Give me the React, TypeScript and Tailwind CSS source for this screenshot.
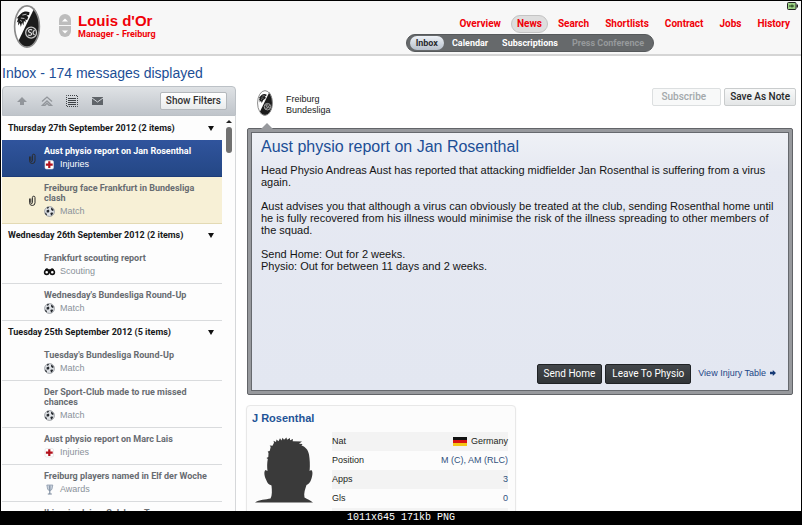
import { clsx } from "clsx";

type IconKind = "injury" | "match" | "scout" | "award";

interface Message {
  title: string;
  category: string;
  icon: IconKind;
  attached?: boolean;
  state?: "selected" | "unread";
}

const groups: { date: string; items: Message[]; count: number }[] = [
  {
    date: "Thursday 27th September 2012",
    count: 2,
    items: [
      { title: "Aust physio report on Jan Rosenthal", category: "Injuries", icon: "injury", attached: true, state: "selected" },
      { title: "Freiburg face Frankfurt in Bundesliga clash", category: "Match", icon: "match", attached: true, state: "unread" },
    ],
  },
  {
    date: "Wednesday 26th September 2012",
    count: 2,
    items: [
      { title: "Frankfurt scouting report", category: "Scouting", icon: "scout" },
      { title: "Wednesday's Bundesliga Round-Up", category: "Match", icon: "match" },
    ],
  },
  {
    date: "Tuesday 25th September 2012",
    count: 5,
    items: [
      { title: "Tuesday's Bundesliga Round-Up", category: "Match", icon: "match" },
      { title: "Der Sport-Club made to rue missed chances", category: "Match", icon: "match" },
      { title: "Aust physio report on Marc Lais", category: "Injuries", icon: "injury" },
      { title: "Freiburg players named in Elf der Woche", category: "Awards", icon: "award" },
      { title: "Ibisevic claims Salzburg To", category: "Match", icon: "match" },
    ],
  },
];

const navItems = ["Overview", "News", "Search", "Shortlists", "Contract", "Jobs", "History"];
const subNavItems = ["Inbox", "Calendar", "Subscriptions", "Press Conference"];

function Crest({ className }: { className?: string }) {
  return (
    <svg viewBox="0 0 26 42" className={className} aria-hidden="true">
      <ellipse cx="13" cy="21" rx="12" ry="20" fill="#fff" />
      <path d="M20 3.500C23.500 8 25 14 25 21c0 11-5 20-12 20-3.500 0-6.500-2-8.500-5.500z" fill="#1b1b1b" />
      <path
        d="M7.500 8c2-1.800 5.500-2.200 8-.8l-.5 2.600-2.500.4 1.800 1.600-1.300 3.200-1.500-1 .2 3-1.700-1.500-.5 4.500-1.300-3-1.200 4.500-1-4-1.700 2.500.2-4L3 17l1.500-4-1.700.3L5 10.500z"
        fill="#1b1b1b"
      />
      <path d="M8.500 9.800l4-.8M7 12.800l3.500.4M6.500 15l1.500 1" stroke="#fff" strokeWidth=".7" />
      <circle cx="17" cy="27" r="5.300" fill="#2b2b2b" stroke="#c9c9c9" strokeWidth="1.200" />
      <path d="M18 24.300c-3.500-1.200-4.700 1.500-2 2.500s1.800 3.700-2 2.500M20.500 24.800c-2.200.5-2.200 4 0 4.200" fill="none" stroke="#e4e4e4" strokeWidth="1.100" />
      <ellipse cx="13" cy="21" rx="12.100" ry="20.100" fill="none" stroke="#8a8a8a" strokeWidth="1.600" />
    </svg>
  );
}

function CategoryIcon({ kind }: { kind: IconKind }) {
  if (kind === "injury") {
    return (
      <svg viewBox="0 0 11 11" className="size-[11px]" aria-hidden="true">
        <rect x="1" y="1.500" width="8.500" height="8.500" rx="1.500" fill="#fff" stroke="#ddd" strokeWidth=".6" />
        <path d="M4.200 2.300h2.200v2.300h2.300v2.200H6.400v2.300H4.200V6.800H1.900V4.600h2.300z" fill="#b3121d" />
      </svg>
    );
  }
  if (kind === "scout") {
    return (
      <svg viewBox="0 0 11 11" className="size-[11px] overflow-visible" aria-hidden="true">
        <path d="M1 3.500Q2.800 1.200 4.600 3.200h1.800Q8.200 1.200 10 3.500V7H1z" fill="#111" />
        <circle cx="2.700" cy="6.300" r="2.100" fill="#fff" stroke="#111" strokeWidth="1.600" />
        <circle cx="8.300" cy="6.300" r="2.100" fill="#fff" stroke="#111" strokeWidth="1.600" />
      </svg>
    );
  }
  if (kind === "award") {
    return (
      <svg viewBox="0 0 11 11" className="size-[11px]" aria-hidden="true">
        <path d="M2.800 1h6l-.8 4Q7.500 6.500 5.800 6.500T3.600 5z" fill="#c9d2dd" stroke="#8391a3" strokeWidth=".7" />
        <path d="M5.800 1.500v8M3.800 10h4" stroke="#77869a" strokeWidth="1.100" />
      </svg>
    );
  }
  return (
    <svg viewBox="0 0 11 11" className="size-[11px]" aria-hidden="true">
      <circle cx="5.500" cy="5.500" r="4.900" fill="#dfe2e6" stroke="#8b8f94" strokeWidth=".8" />
      <path d="M2.500 4.500l2-1 1 1.500-.8 1.600-2-.2zM7 1.500l2.500 1.800-.3 2-2-1.200zM1 6.500l1.500 1 .6 2-1.500-.8zM6.300 7l2-.8.8 1.500-2 2zM3 1.200l2-.3-.4 1.300L3 2.800z" fill="#24282d" />
    </svg>
  );
}

function Paperclip() {
  return (
    <svg viewBox="0 0 8 11" className="h-[11px] w-2" fill="none" stroke="#2b2b2b" aria-hidden="true">
      <path d="M2.800 3.500v4.200a.8.8 0 0 0 1.600 0V2.500a1.300 1.300 0 0 1 2.600 0v5.300a2.700 2.700 0 0 1-5.400 0V3.500" />
    </svg>
  );
}

function MessageRow({ item }: { item: Message }) {
  const selected = item.state === "selected";
  const unread = item.state === "unread";
  return (
    <li
      className={clsx(
        "flex border-b py-[6px]",
        selected && "border-[#1d3c78] bg-linear-to-b from-[#30549d] to-[#244785]",
        unread && "border-[#e3dab4] bg-[#f7f0d6]",
        !item.state && "border-[#d9dbdd]"
      )}
    >
      <div className="flex w-[42px] shrink-0 items-center justify-end pr-2">{item.attached && <Paperclip />}</div>
      <a href="#" className="block min-w-0 flex-1 pr-2">
        <div className={clsx("font-['Roboto',sans-serif] text-[9px] leading-[10px] font-bold", selected ? "text-white" : "text-[#686c71]")}>
          {item.title}
        </div>
        <div className={clsx("mt-[3px] flex items-center gap-[5px] text-[9px] leading-[11px]", selected ? "text-white" : "text-[#8a929a]")}>
          <CategoryIcon kind={item.icon} />
          <span>{item.category}</span>
        </div>
      </a>
    </li>
  );
}

function Header() {
  return (
    <header className="flex justify-between border-b-2 border-[#d5d5d5] bg-[#f7f7f7] pr-[3px] pl-3">
      <div className="flex pt-1">
        <Crest className="h-[43px] w-7" />
        <div className="ml-[18px] flex flex-col gap-px pt-[9px]">
          <button aria-label="Previous" className="flex h-[11px] w-3 items-center justify-center rounded-t-full bg-[#bdbdbd]">
            <svg viewBox="0 0 6 4" className="h-1 w-[6px]"><path d="M0 3.500 3 .5l3 3z" fill="#fff" /></svg>
          </button>
          <button aria-label="Next" className="flex h-[11px] w-3 items-center justify-center rounded-b-full bg-[#bdbdbd]">
            <svg viewBox="0 0 6 4" className="h-1 w-[6px]"><path d="M0 .5h6l-3 3z" fill="#fff" /></svg>
          </button>
        </div>
        <div className="ml-[7px] pt-2 font-bold text-[#f00008]">
          <h1 className="text-[15px] leading-4">Louis d'Or</h1>
          <p className="font-['Roboto',sans-serif] text-[9px] leading-[10px]">Manager - Freiburg</p>
        </div>
      </div>
      <div className="flex flex-col items-end pb-[2px] font-['Roboto',sans-serif]">
        <div className="h-[14px] pt-px">
          <svg viewBox="0 0 11 8" className="h-2 w-[11px]" aria-hidden="true">
            <rect x=".5" y=".5" width="8.500" height="7" rx="1" fill="#9bcf84" stroke="#222" />
            <path d="M9.500 2.500H11v3H9.500z" fill="#222" />
            <path d="M2 4h5M5 2.500v3" stroke="#1c3b16" />
          </svg>
        </div>
        <nav className="flex items-center text-[10px] leading-4 font-bold text-[#f00008]">
          {navItems.map((label) => (
            <a
              key={label}
              href="#"
              className={clsx("mx-[2px] rounded-full border px-[5px]", label === "News" ? "border-[#c4c4c4] bg-[#dedede]" : "border-transparent")}
            >
              {label}
            </a>
          ))}
        </nav>
        <nav className="mt-px mr-36 flex items-center rounded-full border border-[#56595b] bg-[#66696b] px-[2px] text-[9px] leading-[14px] font-bold text-white">
          {subNavItems.map((label) => (
            <a
              key={label}
              href="#"
              className={clsx(
                "m-px rounded-full px-[6px]",
                label === "Inbox" && "bg-linear-to-b from-[#eef2f7] to-[#b6bfca] text-[#2a2d31]",
                label === "Press Conference" && "text-[#96999b]"
              )}
            >
              {label}
            </a>
          ))}
        </nav>
      </div>
    </header>
  );
}

function Toolbar() {
  return (
    <div className="flex items-center justify-between rounded-t border border-[#bcc1c6] bg-linear-to-b from-[#dfe2e5] to-[#bfc4ca] py-[5px] pr-2 pl-3">
      <div className="flex items-center gap-[11px]">
        <button aria-label="Move up">
          <svg viewBox="0 0 14 14" className="size-[14px]"><path d="M7 3l5 5H9v3H5V8H2z" fill="#92969b" /></svg>
        </button>
        <button aria-label="Move to top">
          <svg viewBox="0 0 14 14" className="size-[14px]" fill="none" stroke="#92969b" strokeWidth="1.300"><path d="M2 7.500 7 3l5 4.500M2.500 11.300 7 7l4.500 4.300H9l-2-2-2 2z" /></svg>
        </button>
        <button aria-label="Select all">
          <svg viewBox="0 0 14 14" className="size-[14px]" fill="none" stroke="#3d4145">
            <rect x="1.500" y="1.500" width="11" height="11" strokeDasharray="1 1" strokeDashoffset=".5" />
            <path d="M3 4.500h8M3 6.500h8M3 8.500h8M3 10.500h8" />
          </svg>
        </button>
        <button aria-label="Mark as read">
          <svg viewBox="0 0 14 14" className="size-[14px]"><rect x="2" y="3" width="11" height="8" fill="#5f6469" /><path d="M2 4l5.500 4L13 4" fill="none" stroke="#d0d3d7" /></svg>
        </button>
      </div>
      <button className="rounded-xs border border-[#b4b8bc] bg-linear-to-b from-white to-[#e9ebec] px-[5px] font-['Roboto',sans-serif] text-[10px] leading-4 font-medium text-[#333]">
        Show Filters
      </button>
    </div>
  );
}

function Sidebar() {
  return (
    <aside className="flex w-[234px] shrink-0 flex-col">
      <Toolbar />
      <div className="flex min-h-0 flex-1 border-r border-[#d6d8da] bg-[#fdfdfd] pt-px">
        <div className="min-w-0 flex-1">
          {groups.map((group) => (
            <section key={group.date}>
              <h3 className="flex items-center justify-between pr-2 pl-[6px] font-['Roboto',sans-serif] text-[9px] leading-[23px] font-bold text-[#17191b]">
                {group.date} ({group.count} items)
                <svg viewBox="0 0 6 5" className="h-[5px] w-[6px]" aria-hidden="true"><path d="M0 0h6L3 5z" fill="#111" /></svg>
              </h3>
              <ul>
                {group.items.map((item) => (
                  <MessageRow key={item.title} item={item} />
                ))}
              </ul>
            </section>
          ))}
        </div>
        <div className="flex w-[13px] flex-col items-center gap-1 pt-[3px]">
          <svg viewBox="0 0 6 3" className="h-[3px] w-[6px]" aria-hidden="true"><path d="M0 3l3-3 3 3z" fill="#222" /></svg>
          <div className="h-[26px] w-[6px] rounded-full bg-[#717171]" />
        </div>
      </div>
    </aside>
  );
}

function MessagePanel() {
  return (
    <article className="relative rounded-xs border border-[#626468] bg-[#97999d] p-[3px]">
      <svg viewBox="0 0 12 6" className="absolute -top-[6px] left-[13px] h-[6px] w-3" aria-hidden="true">
        <path d="M0 6l6-6 6 6z" fill="#97999d" />
      </svg>
      <div className="flex min-h-[259px] flex-col border border-[#66696e] bg-linear-to-b from-[#eff1f6] via-[#e6e9f2] via-15% to-[#e3e7f1] pt-1 pr-3 pb-[6px] pl-[9px]">
        <h2 className="text-[16px] leading-5 text-[#1c4e96]">Aust physio report on Jan Rosenthal</h2>
        <div className="mt-[7px] space-y-3 text-[11px] leading-3 text-[#141414]">
          <p>Head Physio Andreas Aust has reported that attacking midfielder Jan Rosenthal is suffering from a virus again.</p>
          <p>
            Aust advises you that although a virus can obviously be treated at the club, sending Rosenthal home until he is fully recovered from his illness would minimise the risk of
            the illness spreading to other members of the squad.
          </p>
          <p>
            Send Home: Out for 2 weeks.
            <br />
            Physio: Out for between 11 days and 2 weeks.
          </p>
        </div>
        <div className="mt-auto flex items-start justify-end gap-[3px]">
          <button className="rounded-xs border border-[#1f2225] bg-linear-to-b from-[#43474b] to-[#313538] px-[6px] font-['Roboto',sans-serif] text-[10px] leading-[18px] text-white">
            Send Home
          </button>
          <button className="rounded-xs border border-[#1f2225] bg-linear-to-b from-[#43474b] to-[#313538] px-[6px] font-['Roboto',sans-serif] text-[10px] leading-[18px] text-white">
            Leave To Physio
          </button>
          <a href="#" className="ml-1 flex items-center gap-1 text-[9px] leading-[18px] text-[#1c4686]">
            View Injury Table
            <svg viewBox="0 0 6 6" className="size-[6px]" aria-hidden="true"><path d="M0 1.800h2.800V0L6 3 2.800 6V4.200H0z" fill="#163a75" /></svg>
          </a>
        </div>
      </div>
    </article>
  );
}

function Silhouette() {
  return (
    <svg viewBox="0 0 60 66" className="h-[66px] w-[60px]" aria-hidden="true">
      <path
        d="M1 65.500c4-3 11-3 15.500-4 1.800-3 1.500-8 1-13-2.500-1-4-2-5.500-6-1.500-3-2.500-8-.5-9.500l2 1c-.5-4-.5-8 .3-12l-1.300-1 1.800-1 .2-4-.8-1.500 2-.5 1-4-1-1.500 2.800.2 1.500-3-.5-2 2.500 1.200.5-2.500 2 1.800 1.500-3 1.500 2.300L28.500.8l1.500 2L32.500.5l.5 2.300L36 1v2.200l3-1.200-.3 2.300L48 4.500l-3 2.200 3.500.3-1 1.500c4 1.500 6.500 4 7.500 9 .8 5 1.200 10 .6 16.500l1.500-1c2 1 1.500 5 .4 8.500-1.200 4-3 6-5 6.500-1.200 4-3 8-2 12.500 3 2 5.500 2.500 8.500 5z"
        fill="#3a3a3a"
      />
    </svg>
  );
}

function PlayerCard() {
  return (
    <section className="w-[270px] rounded-sm border border-[#e8e8e8] bg-[#fcfcfc] pt-[5px] pr-[7px] pl-[5px] shadow-xs">
      <h3 className="text-[11px] leading-[14px] font-bold text-[#1f5497]">J Rosenthal</h3>
      <div className="mt-[7px] flex justify-between">
        <div className="pt-[5px] pl-[2px]">
          <Silhouette />
        </div>
        <table className="w-[176px] text-[9px] leading-[19px] text-[#1d1f21]">
          <tbody>
            <tr className="bg-[#f3f3f3]">
              <th scope="row" className="text-left font-normal">Nat</th>
              <td className="flex items-center justify-end gap-1">
                <svg viewBox="0 0 14 9" className="h-[9px] w-[14px]" aria-hidden="true">
                  <path d="M0 0h14v3H0z" fill="#111" />
                  <path d="M0 3h14v3H0z" fill="#d91414" />
                  <path d="M0 6h14v3H0z" fill="#f5c816" />
                </svg>
                Germany
              </td>
            </tr>
            <tr>
              <th scope="row" className="text-left font-normal">Position</th>
              <td className="text-right text-[#31517c]">M (C), AM (RLC)</td>
            </tr>
            <tr className="bg-[#f3f3f3]">
              <th scope="row" className="text-left font-normal">Apps</th>
              <td className="text-right text-[#31517c]">3</td>
            </tr>
            <tr>
              <th scope="row" className="text-left font-normal">Gls</th>
              <td className="text-right text-[#31517c]">0</td>
            </tr>
            <tr className="bg-[#f3f3f3]">
              <td colSpan={2} className="h-[19px]" />
            </tr>
          </tbody>
        </table>
      </div>
    </section>
  );
}

function App() {
  return (
    <div className="flex h-screen flex-col overflow-hidden bg-black px-px pt-px font-['Liberation_Sans',Arial,sans-serif]">
      <Header />
      <div className="flex min-h-0 flex-1 flex-col overflow-hidden bg-white">
        <h2 className="pt-2 pb-1 pl-px text-[14px] leading-[18px] text-[#1c4e96]">Inbox - 174 messages displayed</h2>
        <div className="flex min-h-0 flex-1 pl-px">
          <Sidebar />
          <main className="min-w-0 flex-1 pl-[10px]">
            <div className="flex items-start justify-between pt-[2px] pr-[5px]">
              <div className="flex gap-[13px] pt-[2px] pl-[11px]">
                <Crest className="h-[26px] w-4" />
                <p className="pt-1 text-[9px] leading-[11px] text-[#191919]">
                  Freiburg
                  <br />
                  Bundesliga
                </p>
              </div>
              <div className="flex gap-[3px] font-['Roboto',sans-serif] text-[10px] leading-4 font-medium">
                <button disabled className="rounded-xs border border-[#dcdfe0] bg-[#f8f9f9] pr-[14px] pl-2 text-[#a3a8ab]">Subscribe</button>
                <button className="rounded-xs border border-[#c9cccd] bg-linear-to-b from-[#f8f9f9] to-[#e4e6e7] px-[5px] text-[#26282a]">Save As Note</button>
              </div>
            </div>
            <div className="pt-3 pr-2 pl-px">
              <MessagePanel />
            </div>
            <div className="pt-[10px]">
              <PlayerCard />
            </div>
          </main>
        </div>
      </div>
      <footer className="bg-black text-center font-['Liberation_Mono',monospace] text-[10px] leading-[14px] text-white">1011x645 171kb PNG</footer>
    </div>
  );
}

export default App;
